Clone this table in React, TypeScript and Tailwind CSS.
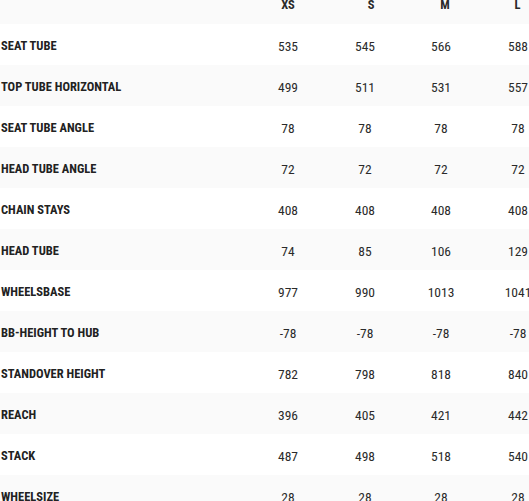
const sizes = ['XS', 'S', 'M', 'L']

const geometry: { label: string; values: string[] }[] = [
  { label: 'SEAT TUBE', values: ['535', '545', '566', '588'] },
  { label: 'TOP TUBE HORIZONTAL', values: ['499', '511', '531', '557'] },
  { label: 'SEAT TUBE ANGLE', values: ['78', '78', '78', '78'] },
  { label: 'HEAD TUBE ANGLE', values: ['72', '72', '72', '72'] },
  { label: 'CHAIN STAYS', values: ['408', '408', '408', '408'] },
  { label: 'HEAD TUBE', values: ['74', '85', '106', '129'] },
  { label: 'WHEELSBASE', values: ['977', '990', '1013', '1041'] },
  { label: 'BB-HEIGHT TO HUB', values: ['-78', '-78', '-78', '-78'] },
  { label: 'STANDOVER HEIGHT', values: ['782', '798', '818', '840'] },
  { label: 'REACH', values: ['396', '405', '421', '442'] },
  { label: 'STACK', values: ['487', '498', '518', '540'] },
  { label: 'WHEELSIZE', values: ['28', '28', '28', '28'] },
]

export default function App() {
  return (
    <div className="w-full h-[501px] overflow-hidden bg-white font-['Roboto_Condensed','Roboto',sans-serif] text-[#2a2a2a]">
      <div className="w-[560px] -mt-[17px]">
        <div className="grid grid-cols-[249px_78px_88px_60px_85px] h-[41px] pt-[4px] items-center bg-[#fafafa] text-[12.5px] font-bold">
          <span />
          {sizes.map((size) => (
            <span key={size} className="text-center">
              {size}
            </span>
          ))}
        </div>
        {geometry.map((row, i) => (
          <div
            key={row.label}
            className={`grid grid-cols-[249px_78px_76px_76px_78px] h-[41px] pt-[3px] items-center ${
              i % 2 === 0 ? 'bg-white' : 'bg-[#fafafa]'
            }`}
          >
            <span className="pl-px text-[12.5px] font-bold text-[#222]">{row.label}</span>
            {row.values.map((value, j) => (
              <span key={j} className="text-center text-[13.5px]">
                {value}
              </span>
            ))}
          </div>
        ))}
      </div>
    </div>
  )
}
